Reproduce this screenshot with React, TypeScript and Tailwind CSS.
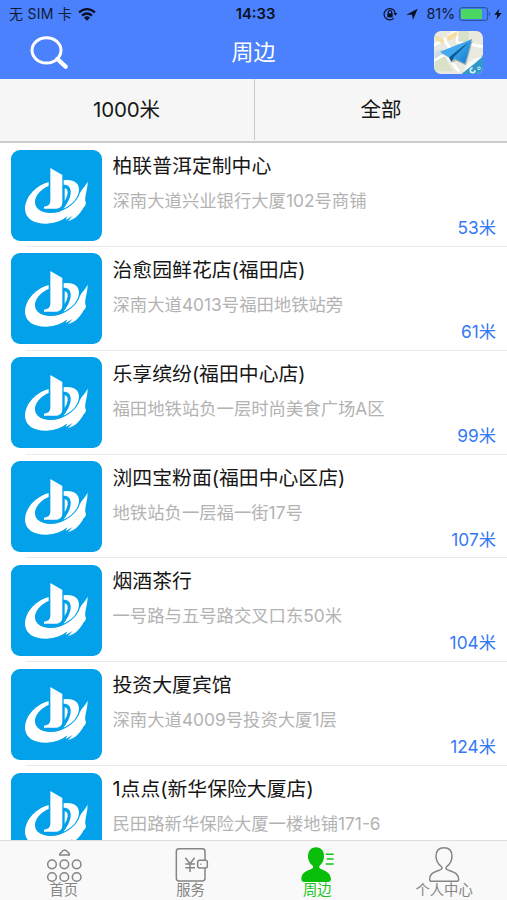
import React from 'react';

type Shop = { name: string; address: string; distance: string };

const shops: Shop[] = [
  { name: '柏联普洱定制中心', address: '深南大道兴业银行大厦102号商铺', distance: '53米' },
  { name: '治愈园鲜花店(福田店)', address: '深南大道4013号福田地铁站旁', distance: '61米' },
  { name: '乐享缤纷(福田中心店)', address: '福田地铁站负一层时尚美食广场A区', distance: '99米' },
  { name: '浏四宝粉面(福田中心区店)', address: '地铁站负一层福一街17号', distance: '107米' },
  { name: '烟酒茶行', address: '一号路与五号路交叉口东50米', distance: '104米' },
  { name: '投资大厦宾馆', address: '深南大道4009号投资大厦1层', distance: '124米' },
  { name: '1点点(新华保险大厦店)', address: '民田路新华保险大厦一楼地铺171-6', distance: '' },
];

function ShopLogo() {
  return (
    <svg className="h-[91px] w-[91px] shrink-0" viewBox="33 27 273 273">
      <rect x="33" y="27" width="273" height="273" rx="27" fill="#02a1e9" />
      <g fill="#fff">
        <path d="M151 81L187 102V184Q187 202 170 203H132V197Q151 195 151 180Z" />
        <path d="M146 123C112 132 76 164 75 203C75 235 107 249 140 248C164 247 186 239 202 226L197 237L218 225L204 240C226 235 241 217 250 200C257 194 260 188 256 180C254 165 263 145 263 122C253 140 241 148 237 164C222 193 185 217 151 216C121 215 103 201 105 180C107 161 127 142 146 135Z" />
        <path d="M191 118C219 113 238 126 237 146C236 171 216 191 190 203C205 185 213 166 212 150C211 136 201 130 191 131Z" />
        <path d="M194 142Q204 143 203 157Q201 169 194 180Z" />
      </g>
    </svg>
  );
}

function MapLogo() {
  return (
    <svg className="h-[43px] w-[49px]" viewBox="0 0 147 129">
      <defs>
        <clipPath id="map-edge"><rect width="147" height="129" rx="21" /></clipPath>
        <linearGradient id="plane" x1="0" y1="0" x2="1" y2="1">
          <stop stopColor="#55b9f5" /><stop offset="1" stopColor="#0877cc" />
        </linearGradient>
      </defs>
      <g clipPath="url(#map-edge)">
        <rect width="147" height="129" fill="#e9e9df" />
        <path d="M-5 45L31 26L72-5M31 26L58 67M-5 92L35 70L75 121M70 0V32L147 47" stroke="#fff" strokeWidth="9" fill="none" />
        <path d="M3 12L31 27L27 40L5 25M35 18L70 0V14L44 29" fill="#f5dfa0" />
        <path d="M73 0H104V32H73ZM3 91L31 76L57 121H3Z" fill="#d9e2c8" />
        <path d="M4 63L27 54L29 66L4 83Z" fill="#c9ddea" />
        <path d="M83 129L147 72V129Z" fill="#3199ca" />
        <path d="M88 124Q99 83 147 76Q120 101 88 124Z" fill="#f5fafb" />
        <path d="M19 64L114 27L94 100L64 86L51 94L45 79Z" fill="#4b6470" opacity=".4" transform="translate(2 3)" />
        <path d="M18 62L114 24L45 79Z" fill="#42aaf0" />
        <path d="M45 79L114 24L51 92Z" fill="#075b9c" />
        <path d="M57 81L114 24L93 98Z" fill="url(#plane)" />
        <circle cx="116" cy="118" r="7" fill="none" stroke="#d6eff8" strokeWidth="5" strokeDasharray="30 14" />
        <circle cx="135" cy="112" r="4" fill="none" stroke="#d6eff8" strokeWidth="3" />
      </g>
    </svg>
  );
}

function StatusBar() {
  return (
    <div className="grid h-[28px] grid-cols-[1fr_auto_1fr] items-center pr-[5px] pl-[9px] text-[14.5px] leading-[28px] text-[#101b36]">
      <div className="flex items-center">
        <span className="text-[14px] tracking-[0.25px]">无 SIM 卡</span>
        <svg className="ml-[6px] h-[13px] w-[18px]" viewBox="0 0 54 39" fill="none" stroke="#081022" strokeWidth="7">
          <path d="M3 13Q27-6 51 13M12 23Q27 10 42 23" />
          <path d="M18 29Q27 21 36 29L27 38Z" fill="#081022" stroke="none" />
        </svg>
      </div>
      <span className="text-[14.8px] font-semibold text-[#081022]">14:33</span>
      <div className="flex items-center justify-end">
        <svg className="mr-[8px] h-[14px] w-[15px]" viewBox="0 0 45 42" fill="none" stroke="#081022" strokeWidth="3.5">
          <path d="M32 34A17 17 0 1 1 37 19" />
          <path d="M31 18H43L37 26Z" fill="#081022" stroke="none" />
          <rect x="13" y="19" width="16" height="12" fill="#081022" stroke="none" />
          <path d="M16 20V14Q21 7 26 14V20" />
        </svg>
        <svg className="mr-[8px] h-[12px] w-[12px]" viewBox="0 0 36 36"><path d="M1 20L35 2L21 35L18 20Z" fill="#081022" /></svg>
        <span className="mr-[4px] tracking-[-0.2px]">81%</span>
        <svg className="mr-[3px] h-[14px] w-[32px]" viewBox="0 0 96 42">
          <rect x="2" y="2" width="84" height="38" rx="7" fill="none" stroke="#28508f" strokeWidth="3" />
          <rect x="6" y="6" width="63" height="30" rx="3" fill="#4bd763" />
          <path d="M90 14Q96 21 90 28Z" fill="#28508f" />
        </svg>
        <svg className="h-[14px] w-[8px]" viewBox="0 0 24 42"><path d="M16 5L1 23H10L7 38L23 18H13Z" fill="#081022" /></svg>
      </div>
    </div>
  );
}

function Header() {
  return (
    <header className="h-[79px] shrink-0 bg-[#4b81fd]">
      <StatusBar />
      <div className="grid h-[49px] grid-cols-[1fr_auto_1fr] items-center pr-[24px] pl-[30px] text-white">
        <svg className="h-[34px] w-[39px]" viewBox="0 0 117 102" fill="none" stroke="white">
          <ellipse cx="49.500" cy="43" rx="43.500" ry="38" strokeWidth="9" />
          <path d="M82 69L107 92" strokeWidth="13" strokeLinecap="round" />
        </svg>
        <h1 className="mr-[6px] text-[22px] leading-[49px]">周边</h1>
        <div className="flex justify-end"><MapLogo /></div>
      </div>
    </header>
  );
}

function ShopRow({ shop }: { shop: Shop }) {
  return (
    <li className="flex h-[103.85px] shrink-0 pt-[6.5px] pl-[11px]">
      <ShopLogo />
      <div className="-ml-[76px] flex flex-1 flex-col border-b border-[#e9e9e9] pr-[11px] pl-[86.5px]">
        <h2 className="mt-[1.5px] text-[19.85px] leading-[30px] whitespace-nowrap text-[#161616]">{shop.name}</h2>
        <p className="mt-[7px] text-[17.35px] leading-[26px] whitespace-nowrap text-[#b3b3b3]">{shop.address}</p>
        <span className="mt-[1px] self-end text-[17.3px] leading-[26px] text-[#3478f6]">{shop.distance}</span>
      </div>
    </li>
  );
}

const tabs = [
  {
    label: '首页', active: false, viewBox: '127 30 126 114',
    icon: <><path d="M180 60Q179 56 185 52Q195 38 205 52Q211 56 209 60Z" /><circle cx="157" cy="88" r="13" /><circle cx="194" cy="88" r="13" /><circle cx="231" cy="88" r="13" /><circle cx="157" cy="126" r="13" /><circle cx="194" cy="126" r="13" /><circle cx="231" cy="126" r="13" /></>,
  },
  {
    label: '服务', active: false, viewBox: '507 30 126 114',
    icon: <><path d="M615 76V49Q615 41 607 41H537Q529 41 529 49V130Q529 138 537 138H607Q615 138 615 130V99" /><rect x="593" y="76" width="29" height="23" rx="6" /><path d="M556 68L570 86L584 68M570 86V111M556 87H585M556 98H585M601 88H604" /></>,
  },
  {
    label: '周边', active: true, viewBox: '129 30 126 114',
    icon: <><path d="M189 37C173 37 165 49 165 64C165 78 172 87 180 93V98C173 106 145 106 145 132Q145 141 154 141H224Q234 141 234 132C232 106 206 106 199 98V93C208 86 213 77 213 64C213 48 205 37 189 37Z" fill="#08be08" stroke="none" /><path d="M218 58H242M221 72H242M218 87H242" /></>,
  },
  {
    label: '个人中心', active: false, viewBox: '509 30 126 114',
    icon: <path d="M572 38C556 38 548 49 548 64C548 79 555 88 565 96Q568 100 563 103C548 111 529 110 529 134Q529 139 537 139H608Q616 139 616 134C615 110 595 111 580 103Q576 100 580 95C591 87 596 78 596 64C596 48 588 38 572 38Z" />,
  },
];

export default function App() {
  return (
    <div className="flex h-[900px] w-[507px] flex-col overflow-hidden bg-white font-['Inter','Noto_Sans_CJK_SC',sans-serif]">
      <Header />
      <div className="flex h-[64px] shrink-0 border-b-2 border-[#cdcdcd] bg-[#f6f6f6] text-[20.5px] text-[#171717]">
        <div className="mb-[1px] flex w-[255px] items-center justify-center border-r border-[#c9c9c9] pt-[2px] pr-[1px] tracking-[-0.15px]">1000米</div>
        <div className="flex flex-1 items-center justify-center pt-[1px]">全部</div>
      </div>
      <ul className="flex min-h-0 flex-1 flex-col overflow-hidden">
        {shops.map((shop) => <ShopRow key={shop.name} shop={shop} />)}
      </ul>
      <nav className="grid h-[60px] shrink-0 grid-cols-4 border-t border-[#dedede] bg-[#f9f9f9]">
        {tabs.map((tab) => (
          <button key={tab.label} className={`flex flex-col items-center pt-[4px] ${tab.active ? 'text-[#15c515]' : 'text-[#858585]'}`}>
            <svg className="h-[38px] w-[42px] shrink-0" viewBox={tab.viewBox} fill="none" stroke="currentColor" strokeWidth="4.5">{tab.icon}</svg>
            <span className="-mt-[2px] ml-[1px] text-[14.3px] leading-[18px]">{tab.label}</span>
          </button>
        ))}
      </nav>
    </div>
  );
}
